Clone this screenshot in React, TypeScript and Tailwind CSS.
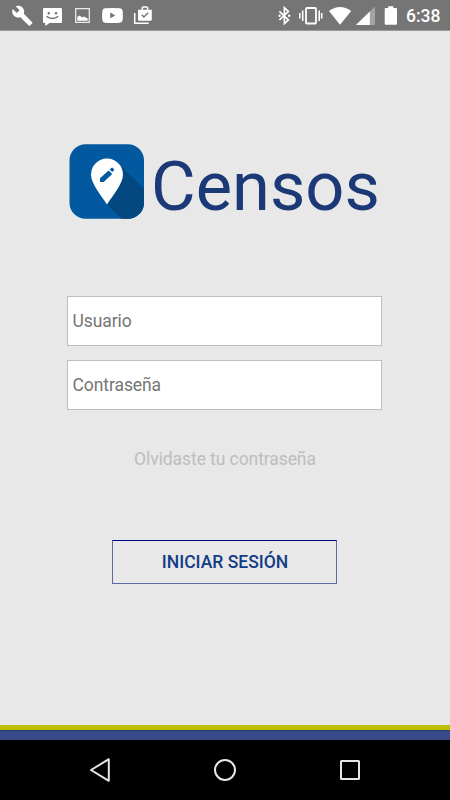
import { useState } from 'react'
import type { ReactNode } from 'react'

interface IconProps {
  box: string
  className: string
  children: ReactNode
}

function Icon({ box, className, children }: IconProps) {
  return (
    <svg viewBox={box} className={`block shrink-0 ${className}`} fill="currentColor" aria-hidden="true">
      {children}
    </svg>
  )
}

function StatusBar() {
  return (
    <header className="flex h-[31px] shrink-0 items-start justify-between border-b border-[#9a9a9a] bg-[#757575] text-white">
      <div className="flex pl-[10px]">
        <Icon box="10 0 26 30" className="h-[30px] w-[26px]">
          <g transform="translate(11.3 4.7) scale(.92)">
            <path d="M22.7 19l-9.1-9.1c.9-2.3.4-5-1.5-6.9-2-2-5-2.4-7.4-1.3L9 6 6 9 1.6 4.7C.4 7.1.9 10.1 2.9 12.1c1.9 1.9 4.6 2.4 6.9 1.5l9.1 9.1c.4.4 1 .4 1.4 0l2.3-2.3c.5-.4.5-1.1.1-1.4z" />
          </g>
        </Icon>
        <Icon box="36 0 32 30" className="h-[30px] w-[32px]">
          <path d="M44 8h17a1 1 0 0 1 1 1v13a1 1 0 0 1-1 1H49.5L45.2 26v-3H44a1 1 0 0 1-1-1V9a1 1 0 0 1 1-1z" />
          <circle cx="48.8" cy="13.2" r="1.2" fill="#757575" />
          <circle cx="56" cy="13.2" r="1.2" fill="#757575" />
          <path d="M46.6 16.2c3 3 8.6 3 11.6 0" fill="none" stroke="#757575" strokeWidth="1.5" />
        </Icon>
        <Icon box="68 0 28 30" className="h-[30px] w-[28px]">
          <path d="M75.7 8.7h13.600v13.600H75.700z" fill="none" stroke="currentColor" strokeWidth="1.3" opacity=".85" />
          <path d="M77.3 20.8v-4l2.500-1.300 2.200 2 2-1 3.700 2v2.300z" />
        </Icon>
        <Icon box="96 0 32 30" className="h-[30px] w-[32px]">
          <path d="M105 8.2q7.500-.6 15 0 2.400.3 2.700 2.700.4 4.600 0 9.200-.3 2.400-2.700 2.700-7.500.6-15 0-2.400-.3-2.700-2.700-.4-4.600 0-9.200.3-2.400 2.700-2.700z" />
          <path d="M110.2 12.6v5.600l5.200-2.800z" fill="#757575" />
        </Icon>
        <Icon box="128 0 28 30" className="h-[30px] w-[28px]">
          <path d="M134.7 13v10.300h14" fill="none" stroke="currentColor" strokeWidth="1.5" />
          <path d="M142.3 10V7.800q0-.9.9-.9h3.500q.9 0 .9.900V10" fill="none" stroke="currentColor" strokeWidth="1.5" />
          <path d="M138 9.7h13.800v9.500q0 1.500-1.500 1.500h-10.800q-1.500 0-1.500-1.500z" />
          <path d="M141.7 14.8l2.200 2.200 4.200-4.200" fill="none" stroke="#757575" strokeWidth="1.4" />
        </Icon>
      </div>
      <div className="flex">
        <Icon box="274 0 20 30" className="h-[30px] w-[20px]">
          <path d="M279.4 11.300l9 8.600-4 3.700V7.700l4 3.700-9 8.600" fill="none" stroke="currentColor" strokeWidth="1.700" />
          <circle cx="279.600" cy="15.700" r="1.200" />
          <circle cx="289.200" cy="15.700" r="1.200" />
        </Icon>
        <Icon box="294 0 32 30" className="h-[30px] w-[32px]">
          <rect x="306" y="8" width="10" height="15.500" rx="1" fill="none" stroke="currentColor" strokeWidth="1.8" />
          <path d="M302.7 10.500v10.500M299.800 13v5.500M319.200 10.500v10.500M321.700 13v5.500" stroke="currentColor" strokeWidth="1.6" />
        </Icon>
        <Icon box="326 0 28 30" className="h-[30px] w-[28px]">
          <path d="M340 24.800L329 11q11-8 22.200 0z" />
        </Icon>
        <Icon box="354 0 26 30" className="h-[30px] w-[26px]">
          <path d="M375 6.500V25h-19z" opacity=".35" />
          <path d="M369.8 11.600V25H356z" />
        </Icon>
        <Icon box="380 0 22 30" className="h-[30px] w-[22px]">
          <path d="M388.2 6.200h5.200v1.900h2.600q1 0 1 1v14.700q0 1-1 1h-10.300q-1 0-1-1V9.100q0-1 1-1h2.500z" />
        </Icon>
        <span className="w-12 pt-[6px] pl-1 text-[17.5px] leading-[21px] font-medium">6:38</span>
      </div>
    </header>
  )
}

function Logo() {
  return (
    <div className="flex h-[75px] items-center pl-[69px]">
      <Icon box="0 0 75 75" className="size-[75px]">
        <clipPath id="tile">
          <rect x=".5" y=".3" width="74.5" height="74.4" rx="16" />
        </clipPath>
        <g clipPath="url(#tile)">
          <rect width="75" height="75" fill="#02599f" />
          <path d="M49 19L75 45v30H52.500L38 60.500z" fill="#034880" />
        </g>
        <path d="M38 60.500C33 52.500 22 40 22 30.500a16 16 0 0 1 32 0C54 40 43 52.500 38 60.500z" fill="#fff" />
        <path d="M31 38v-3.700l8.600-7.900 3.600 3.600-8.500 8zM40.700 25.400l1.600-1.500q.8-.7 1.500 0l1 1q.8.8 0 1.500l-1.600 1.600z" fill="#02599f" />
      </Icon>
      <h1 className="ml-[7px] pt-[10px] text-[68.6px] leading-[75px] text-[#1b3976]">Censos</h1>
    </div>
  )
}

const inputClass =
  'block h-[50px] w-[315px] border border-[#bdbdbd] bg-white px-[4.5px] text-[17.5px] tracking-[-0.08px] text-[#333] outline-none placeholder:text-[#757575]'

function LoginForm() {
  const [user, setUser] = useState('')
  const [password, setPassword] = useState('')

  return (
    <form className="mt-[77px] flex w-[449px] flex-col items-center" onSubmit={(e) => e.preventDefault()}>
      <input
        className={inputClass}
        placeholder="Usuario"
        value={user}
        onChange={(e) => setUser(e.target.value)}
      />
      <input
        type="password"
        className={`mt-[14px] ${inputClass}`}
        placeholder="Contraseña"
        value={password}
        onChange={(e) => setPassword(e.target.value)}
      />
      <a className="mt-[37px] pl-px text-[17.5px] leading-6 tracking-[-0.08px] text-[#bdbdbd]">Olvidaste tu contraseña</a>
      <button
        type="submit"
        className="mt-[69px] h-[44px] w-[225px] border border-x-[#5c6ca3] border-t-[#000080] border-b-[#5c6ca3] pt-px pl-px text-[17.5px] font-medium text-[#123c86]"
      >
        INICIAR SESIÓN
      </button>
    </form>
  )
}

function NavBar() {
  return (
    <nav className="flex h-[60px] shrink-0 items-center justify-between bg-black px-[85px] text-[#e6e6e6]">
      <Icon box="0 0 30 30" className="size-[30px]">
        <path d="M23.8 4.200v21.600L6 15z" fill="none" stroke="currentColor" strokeWidth="2" strokeLinejoin="round" />
      </Icon>
      <Icon box="0 0 30 30" className="size-[30px]">
        <circle cx="15" cy="15" r="10" fill="none" stroke="currentColor" strokeWidth="2" />
      </Icon>
      <Icon box="0 0 30 30" className="size-[30px]">
        <rect x="6" y="6" width="18" height="18" rx=".5" fill="none" stroke="currentColor" strokeWidth="2" />
      </Icon>
    </nav>
  )
}

export default function App() {
  return (
    <div className="flex h-[800px] w-[450px] flex-col overflow-hidden bg-[#e8e8e8] font-[Roboto,sans-serif]">
      <StatusBar />
      <main className="flex-1 pt-[113px]">
        <Logo />
        <LoginForm />
      </main>
      <div className="h-[15px] shrink-0 border-t-[5px] border-[#bcbe00] bg-[#394a8a]">
        <div className="h-px bg-[#24406c]" />
      </div>
      <NavBar />
    </div>
  )
}
